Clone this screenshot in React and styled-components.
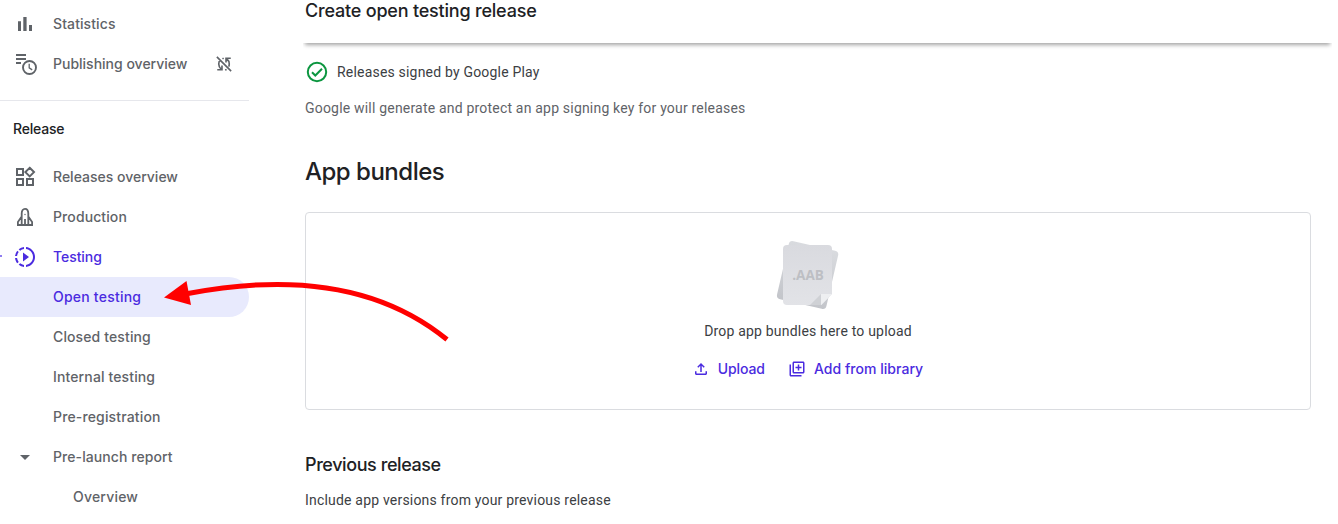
import React from 'react';
import styled, { createGlobalStyle } from 'styled-components';

const Global = createGlobalStyle`
  * { box-sizing: border-box; }
  html, body { margin: 0; background: #fff; overflow: hidden; }
  h1, h2, h3, p { margin: 0; }
`;

const brand = 'Inter, "Liberation Sans", sans-serif';
const body = 'Roboto, "Liberation Sans", sans-serif';

const Page = styled.div`
  position: relative;
  display: flex;
  width: 1338px;
  height: 524px;
  overflow: hidden;
  background: #fff;
`;

const Sidebar = styled.nav`
  width: 249px;
  flex: none;
  padding-top: 4px;
`;

const NavItem = styled.a`
  position: relative;
  display: flex;
  align-items: center;
  height: 40px;
  border-radius: 0 20px 20px 0;
  background: ${(p) => (p.$selected ? '#e8eafd' : 'transparent')};
  color: ${(p) => (p.$active ? '#4a2be0' : '#5f6368')};
  font: 500 14px/20px ${brand};
`;

const IconSlot = styled.span`
  display: flex;
  justify-content: center;
  flex: none;
  width: ${(p) => (p.$nested ? 73 : 53)}px;
  padding-right: 3px;
`;

const Label = styled.span`
  flex: 1;
  white-space: nowrap;
  letter-spacing: ${(p) => p.$track || 0}px;
`;

const Trailing = styled.span`
  display: flex;
  margin-right: 16px;
`;

const ExpandMark = styled.i`
  position: absolute;
  left: 0;
  top: 18px;
  width: 2px;
  height: 2px;
  background: #8f7df0;
`;

const Divider = styled.hr`
  margin: 16px 0 0;
  border: 0;
  border-top: 1px solid #e6e7ec;
`;

const GroupTitle = styled.h3`
  height: 56px;
  padding-left: 13px;
  color: #202124;
  font: 550 14px/56px ${brand};
  letter-spacing: -0.2px;
`;

const Main = styled.main`
  flex: 1;
  padding: 0 6px 0 54px;
`;

const Header = styled.header`
  height: 43px;
  padding-left: 2px;
  box-shadow: 0 4px 4px -2px rgba(0, 0, 0, 0.36);
  clip-path: inset(0 0 -8px 0);
`;

const Title = styled.h1`
  color: #202124;
  font: 500 18px/22px ${brand};
  letter-spacing: -0.2px;
`;

const Content = styled.section`
  padding: 19px 21px 0 2px;
`;

const Signed = styled.div`
  display: flex;
  align-items: center;
  gap: 8px;
  height: 20px;
`;

const Text = styled.p`
  color: ${(p) => (p.$muted ? '#5f6368' : '#3c4043')};
  font: 400 14px/20px ${body};
  letter-spacing: 0.195px;
  margin-top: ${(p) => p.$top || 0}px;
  white-space: nowrap;
`;

const Heading = styled.h2`
  margin-top: 38px;
  color: #202124;
  font: 530 24px/32px ${brand};
  letter-spacing: -0.5px;
`;

const DropZone = styled.div`
  display: flex;
  flex-direction: column;
  align-items: center;
  height: 198px;
  margin-top: 24px;
  padding-top: 26px;
  border: 1px solid #dadce0;
  border-radius: 4px;
`;

const Actions = styled.div`
  display: flex;
  gap: 23px;
  margin: 18px 1px 0 0;
`;

const Action = styled.button`
  display: flex;
  align-items: center;
  gap: 8px;
  padding: 0;
  border: 0;
  background: none;
  color: #4a2be0;
  font: 500 14px/20px ${brand};
  letter-spacing: ${(p) => p.$track || 0}px;
  white-space: nowrap;
`;

const SubHeading = styled.h3`
  margin-top: 43px;
  color: #202124;
  font: 530 18px/24px ${brand};
  letter-spacing: -0.42px;
`;

const Annotation = styled.svg`
  position: absolute;
  left: 150px;
  top: 270px;
`;

const Svg = ({ size = 24, children, ...rest }) => (
  <svg width={size} height={size} viewBox="0 0 24 24" fill="currentColor" {...rest}>{children}</svg>
);

const StatsIcon = () => (
  <Svg><path d="M5 9.200h3V19H5zM10.300 5h3.300v14h-3.300zM16 13h3v6h-3z" /></Svg>
);

const PublishingIcon = () => (
  <Svg>
    <path d="M3 2h10v2H3zM3 6h10v2H3zM3 10h5v2H3z" />
    <circle cx="16.500" cy="15.500" r="6.500" fill="none" stroke="currentColor" strokeWidth="1.900" />
    <path d="M16.200 11.700v4.200l3 2" fill="none" stroke="currentColor" strokeWidth="1.300" />
  </Svg>
);

const SyncOffIcon = () => (
  <Svg size={18} fill="none" stroke="currentColor" strokeWidth="2.200">
    <path d="M2.500 2.500 21.500 21.500M7 6C5.400 7.700 5 9.700 5 12c0 2.600 1 5 3.400 7M3 19.700h6.300v-5.700M10 5.200l1.500-1M13.500 20l2-.8M18.200 15.500c.6-1 .8-2.200.8-3.500 0-2.600-1-5-3.400-7M21 4.300h-6.300V10" />
  </Svg>
);

const OverviewIcon = () => (
  <Svg fill="none" stroke="currentColor" strokeWidth="2">
    <path d="M4 4h6v6H4zM4 14h6v6H4zM14 14h6v6h-6zM16.700 2.800 21 7.100l-4.300 4.300-4.300-4.300z" />
  </Svg>
);

const RocketIcon = () => (
  <Svg fill="none" stroke="currentColor" strokeWidth="1.800">
    <path d="M8.700 20V8.500c0-3 1.500-4.700 3.300-4.700s3.300 1.700 3.300 4.700V20M8.700 11.500l-3.800 5.500v3h14.200v-3l-3.800-5.500M12 14v6" />
    <circle cx="12" cy="9.500" r=".7" fill="currentColor" stroke="none" />
  </Svg>
);

const TestingIcon = () => (
  <Svg>
    <path d="M13 2.050v2.020c3.950.49 7 3.850 7 7.930s-3.050 7.440-7 7.930v2.020c5.050-.5 9-4.760 9-9.950s-3.950-9.450-9-9.950zM5.670 19.740A9.980 9.980 0 0 0 11 21.950v-2.020a7.940 7.940 0 0 1-3.900-1.620zM7.100 5.690A7.940 7.940 0 0 1 11 4.070V2.050a9.980 9.980 0 0 0-5.330 2.210zM5.690 7.100 4.260 5.680A9.880 9.880 0 0 0 2.050 11h2.020c.18-1.460.76-2.790 1.620-3.900zM4.070 13H2.050c.2 2.010 1 3.840 2.210 5.320l1.430-1.430A7.870 7.870 0 0 1 4.070 13zM10 16.500l6-4.500-6-4.500z" />
  </Svg>
);

const CaretIcon = () => (<Svg><path d="m7 10 5 5 5-5z" /></Svg>);

const CheckIcon = () => (
  <Svg fill="none" stroke="#0c9640" strokeWidth="2">
    <circle cx="12" cy="12" r="9.200" /><path d="m7 12.200 3.300 3.300 6.700-6.700" />
  </Svg>
);

const UploadIcon = () => (
  <Svg size={18}><path d="M18 15v3H6v-3H4v3c0 1.100.9 2 2 2h12c1.100 0 2-.9 2-2v-3h-2zM7 9l1.410 1.410L11 7.830V16h2V7.830l2.590 2.580L17 9l-5-5-5 5z" /></Svg>
);

const LibraryIcon = () => (
  <Svg size={18}><path d="M4 6H2v14c0 1.100.9 2 2 2h14v-2H4V6zm16-4H8c-1.100 0-2 .9-2 2v12c0 1.100.9 2 2 2h12c1.100 0 2-.9 2-2V4c0-1.100-.9-2-2-2zm0 14H8V4h12v12zm-7-2h2v-3h3V9h-3V6h-2v3h-3v2h3z" /></Svg>
);

const BundleArt = () => (
  <svg width="64" height="72" viewBox="0 0 64 72">
    <defs>
      <linearGradient id="back" x1="0" y1="0" x2="0" y2="1">
        <stop offset="0" stopColor="#d9dbdf" /><stop offset="1" stopColor="#c3c5ca" />
      </linearGradient>
      <linearGradient id="front" x1="0" y1="0" x2="0" y2="1">
        <stop offset="0" stopColor="#d9dadf" /><stop offset="1" stopColor="#e2e3e7" />
      </linearGradient>
    </defs>
    <rect x="6.300" y="6.300" width="50.700" height="59.500" rx="4" fill="url(#back)" transform="rotate(13 32 35.800)" />
    <path d="M11 6h41a4 4 0 0 1 4 4v45L45.500 66H11a4 4 0 0 1-4-4V10a4 4 0 0 1 4-4z" fill="url(#front)" />
    <path d="M34 66 45 55v11z" fill="#cfd1d5" />
    <path d="M45 55h11L45 66z" fill="#eeeff1" />
    <text x="32" y="41" textAnchor="middle" fontFamily="Open Sans" fontWeight="700" fontSize="13.500" fill="#bdbfc4">.AAB</text>
  </svg>
);

const Item = ({ icon, label, track, nested, active, selected, mark, trailing }) => (
  <NavItem $active={active} $selected={selected}>
    {mark && <ExpandMark />}
    <IconSlot $nested={nested}>{icon}</IconSlot>
    <Label $track={track}>{label}</Label>
    {trailing && <Trailing>{trailing}</Trailing>}
  </NavItem>
);

export default function App() {
  return (
    <Page>
      <Global />
      <Sidebar>
        <Item icon={<StatsIcon />} label="Statistics" track={0.1} />
        <Item icon={<PublishingIcon />} label="Publishing overview" trailing={<SyncOffIcon />} />
        <Divider />
        <GroupTitle>Release</GroupTitle>
        <Item icon={<OverviewIcon />} label="Releases overview" />
        <Item icon={<RocketIcon />} label="Production" track={0.1} />
        <Item icon={<TestingIcon />} label="Testing" track={-0.06} active mark />
        <Item label="Open testing" track={0.22} active selected />
        <Item label="Closed testing" track={0.12} />
        <Item label="Internal testing" track={0.13} />
        <Item label="Pre-registration" track={0.15} />
        <Item icon={<CaretIcon />} label="Pre-launch report" track={0.08} />
        <Item label="Overview" track={0.2} nested />
      </Sidebar>
      <Main>
        <Header><Title>Create open testing release</Title></Header>
        <Content>
          <Signed><CheckIcon /><Text>Releases signed by Google Play</Text></Signed>
          <Text $muted $top={16}>Google will generate and protect an app signing key for your releases</Text>
          <Heading>App bundles</Heading>
          <DropZone>
            <BundleArt />
            <Text $top={10}>Drop app bundles here to upload</Text>
            <Actions>
              <Action $track={-0.12}><UploadIcon />Upload</Action>
              <Action $track={0.04}><LibraryIcon />Add from library</Action>
            </Actions>
          </DropZone>
          <SubHeading>Previous release</SubHeading>
          <Text $top={13}>Include app versions from your previous release</Text>
        </Content>
      </Main>
      <Annotation width="310" height="80" viewBox="0 0 310 80">
        <path d="M297 69.500C228 13 137 4.500 38 23.500" fill="none" stroke="#f00" strokeWidth="5" />
        <path d="M14 27.500 36.500 11 41 35z" fill="#f00" />
      </Annotation>
    </Page>
  );
}
